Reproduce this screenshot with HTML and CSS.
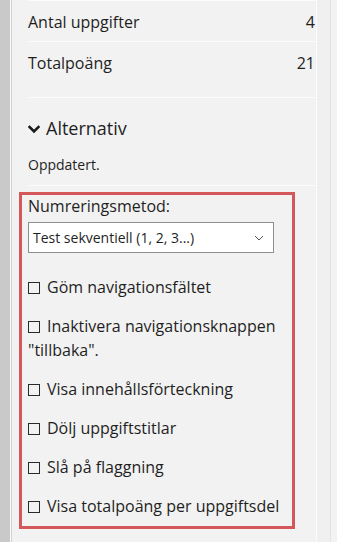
FILE: index.html
```html
<!DOCTYPE html>
<html lang="sv">
<head>
<meta charset="utf-8">
<title>Alternativ</title>
<link rel="stylesheet" href="styles.css">
</head>
<body>
<div class="frame">
  <div class="rail"></div>
  <div class="panel">
    <div class="stats">
      <div class="row"><span>Antal uppgifter</span><span>4</span></div>
      <div class="row"><span>Totalpoäng</span><span>21</span></div>
    </div>
    <div class="options">
      <h2 class="heading">
        <svg class="chev" viewBox="0 0 12 9" width="12" height="9" aria-hidden="true"><path d="M1.5 2 L6 6.5 L10.5 2" fill="none" stroke="#1a1a1a" stroke-width="2.6" stroke-linecap="square"/></svg>
        <span>Alternativ</span>
      </h2>
      <p class="status">Oppdatert.</p>
    </div>
    <div class="box">
      <div class="label">Numreringsmetod:</div>
      <div class="select">
        <span>Test sekventiell (1, 2, 3...)</span>
        <svg class="caret" viewBox="0 0 10 6" width="10" height="6" aria-hidden="true"><path d="M1 1 L5 5 L9 1" fill="none" stroke="#555" stroke-width="1"/></svg>
      </div>
      <ul class="checks">
        <li><span class="cb"></span>Göm navigationsfältet</li>
        <li><span class="cb"></span>Inaktivera navigationsknappen "tillbaka".</li>
        <li><span class="cb"></span>Visa innehållsförteckning</li>
        <li><span class="cb"></span>Dölj uppgiftstitlar</li>
        <li><span class="cb"></span>Slå på flaggning</li>
        <li><span class="cb"></span>Visa totalpoäng per uppgiftsdel</li>
      </ul>
    </div>
  </div>
  <div class="gutter"></div>
</div>
</body>
</html>
```

FILE: styles.css
```css
html, body {
  margin: 0;
  padding: 0;
  height: 100%;
}
body {
  font-family: "Open Sans", "Noto Sans", sans-serif;
  color: #1f1f1f;
  background: #f1f1f1;
  overflow: hidden;
}
.frame {
  display: flex;
  height: 542px;
}
.rail {
  width: 10px;
  background: #c9c9c9;
  border-right: 1px solid #fbfbfb;
  flex: none;
}
.panel {
  flex: none;
  width: 306px;
  background: #f2f2f2;
  border-left: 1px solid #d2d2d2;
  border-right: 1px solid #fbfbfb;
  padding-left: 16px;
  box-sizing: border-box;
}
.gutter {
  flex: 1;
  background: #f0f0f0;
  border-right: 6px solid #f3f3f3;
  box-shadow: inset -7px 0 0 -6px #e4e4e4;
}
.stats {
  font-size: 16px;
}
.row {
  display: flex;
  justify-content: space-between;
  height: 40px;
  line-height: 42px;
  border-top: 1px solid #fbfbfb;
  padding-right: 1px;
}
.options {
  margin-top: 15px;
  border-top: 1px solid #fbfbfb;
  border-bottom: 1px solid #fbfbfb;
  padding: 17px 0 10px;
}
.heading {
  margin: 0;
  font-size: 18px;
  font-weight: 400;
  line-height: 26px;
  display: flex;
  align-items: center;
  gap: 6px;
}
.chev {
  margin-top: 2px;
}
.status {
  margin: 14px 0 0;
  font-size: 14px;
  line-height: 20px;
}
.box {
  margin: 6px 0 0 -9px;
  width: 276px;
  box-sizing: border-box;
  border: 3px solid #d4575a;
  padding: 0 6px 8px;
  font-size: 16px;
}
.label {
  line-height: 22px;
}
.select {
  margin-top: 5px;
  width: 246px;
  height: 31px;
  box-sizing: border-box;
  background: #fff;
  border: 1px solid #8f8f8f;
  display: flex;
  align-items: center;
  justify-content: space-between;
  padding: 0 9px 0 4px;
  font-size: 14px;
}
.checks {
  list-style: none;
  margin: 22px 0 0;
  padding: 0;
}
.checks li {
  line-height: 24px;
  margin-bottom: 15px;
}
.checks li:last-child {
  margin-bottom: 0;
}
.cb {
  display: inline-block;
  width: 10px;
  height: 10px;
  border: 1px solid #2a2a2a;
  margin-right: 7px;
  vertical-align: -1px;
}
```
